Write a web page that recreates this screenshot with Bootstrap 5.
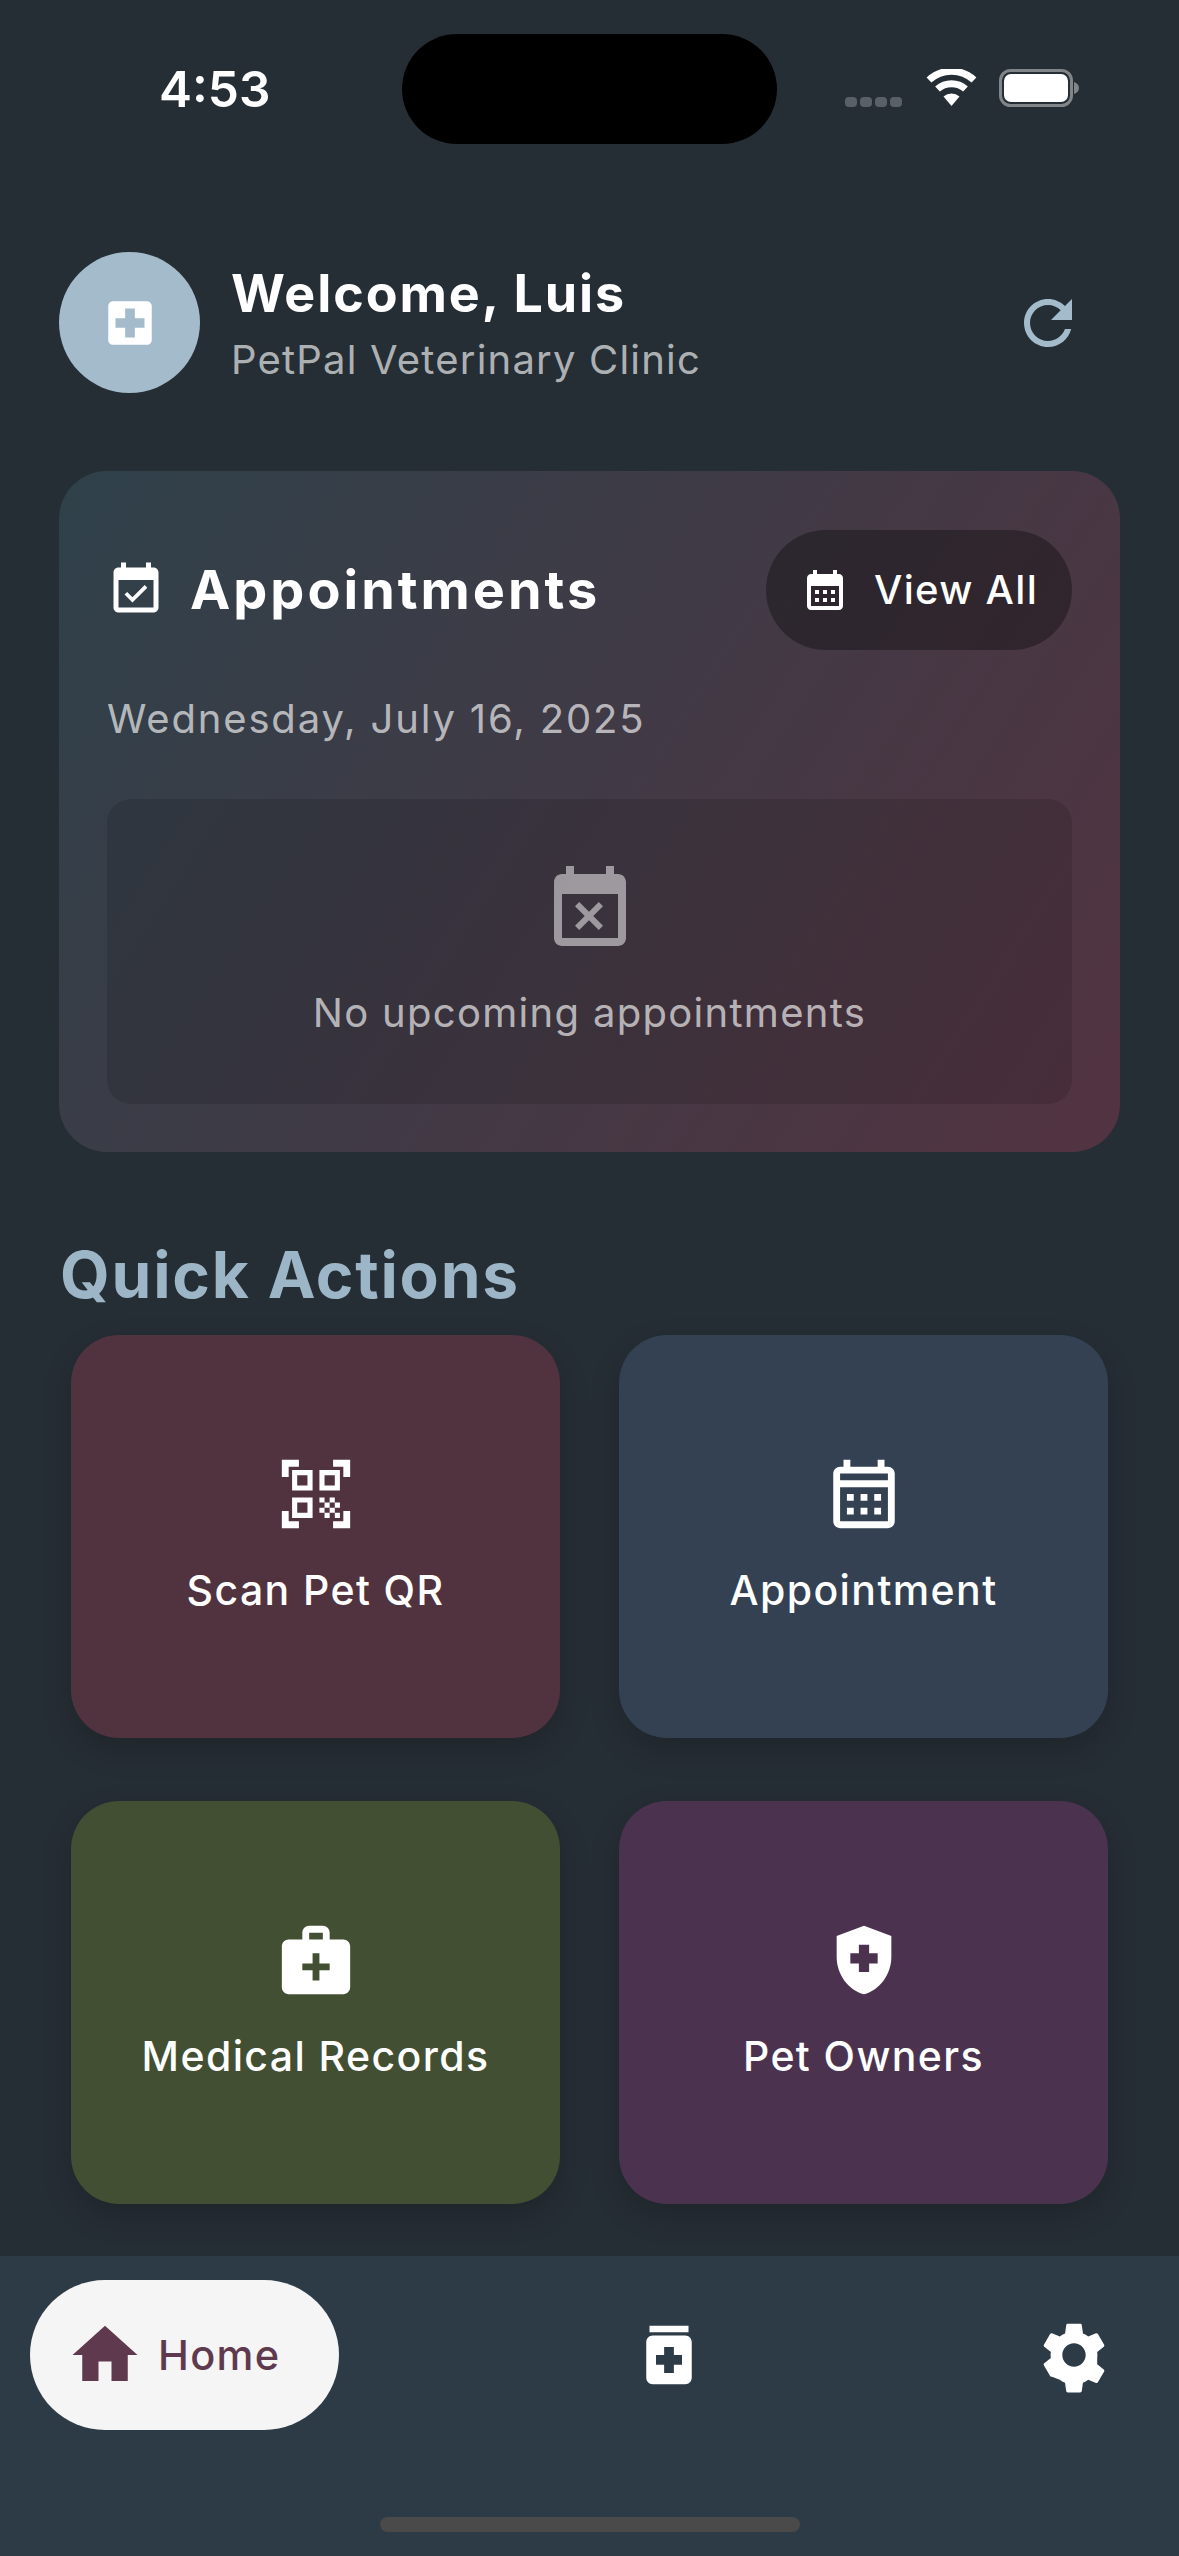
<!DOCTYPE html>
<html lang="en">
<head>
    <meta charset="UTF-8">
    <meta name="viewport" content="width=device-width, initial-scale=1.0">
    <title>PetPal Home</title>
    <link href="https://cdn.jsdelivr.net/npm/bootstrap@5.3.0/dist/css/bootstrap.min.css" rel="stylesheet">
    <style>
        body { background: #262e35; font-family: Inter, "Liberation Sans", sans-serif; color: #fff; }
        .phone-screen { width: 1179px; height: 2556px; overflow: hidden; }
        svg { display: block; flex-shrink: 0; fill: currentColor; }

        .status-row { height: 144px; padding: 34px 99px 0 159px; }
        .status-time { width: 243px; font-size: 49.5px; font-weight: 600; line-height: 110px; }
        .island { width: 375px; height: 110px; background: #000; border-radius: 55px; }
        .status-icons { margin-left: 68px; height: 110px; padding-top: 35px; }
        .signal-dots { gap: 3px; margin: 28px 24px 0 0; }
        .signal-dots span { width: 12px; height: 10px; border-radius: 4px; background: #596067; }
        .wifi-icon { margin-right: 22px; }

        .welcome-row { margin-top: 108px; padding: 0 59px; height: 141px; }
        .avatar-circle { width: 141px; height: 141px; background: #a3bbcb; color: #fff; }
        .welcome-text { margin-left: 31px; }
        .welcome-title { font-size: 52px; font-weight: 700; letter-spacing: 1.9px; line-height: 62px; margin: 0 0 10px; }
        .welcome-sub { font-size: 40px; letter-spacing: 1.2px; line-height: 50px; margin-bottom: -2px; color: rgba(255,255,255,.65); }
        .refresh-icon { color: #a3bbcb; margin-right: 36px; }

        .appt-card { margin: 78px 59px 0; height: 681px; padding: 48px; border: 0; border-radius: 48px; color: #fff;
            background: linear-gradient(123deg, #2f414a 0%, #533341 100%); }
        .appt-head { height: 120px; margin-top: 11px; }
        .appt-icon { margin-left: -1px; }
        .appt-title { font-size: 54px; font-weight: 700; letter-spacing: 3px; margin: 0 0 0 24px; }
        .view-btn { width: 306px; height: 120px; padding: 0 35px; gap: 25px; font-size: 40px; font-weight: 500; letter-spacing: 1.3px; white-space: nowrap;
            background: rgba(0,0,0,.32); color: #fff; border: 0; }
        .appt-date { font-size: 40px; letter-spacing: 1.85px; line-height: 50px; margin-top: 44px; color: rgba(255,255,255,.65); }
        .appt-empty { height: 307px; margin-top: 55px; border-radius: 24px; background: rgba(0,0,0,.12); padding-top: 63px; }
        .appt-empty svg { color: rgba(255,255,255,.5); }
        .appt-empty p { font-size: 40px; letter-spacing: 1.3px; line-height: 50px; margin: 30px 0 0; color: rgba(255,255,255,.65); }

        .quick-title { margin: 87px 0 0 60px; font-size: 64px; font-weight: 700; letter-spacing: 1.8px; line-height: 72px; color: #9db6c7; }
        .quick-grid { padding: 0 71px; margin-top: 24px; }
        .quick-grid .row { --bs-gutter-x: 59px; --bs-gutter-y: 63px; }
        .quick-tile { height: 403px; padding-bottom: 5px; border: 0; border-radius: 48px; color: #fff; box-shadow: 0 12px 30px rgba(0,0,0,.2); }
        .quick-tile span { font-size: 41px; font-weight: 500; letter-spacing: 1.4px; line-height: 50px; margin-top: 30px; }
        .tile-plum { background: #513340; }
        .tile-slate { background: #334152; }
        .tile-olive { background: #434f32; }
        .tile-violet { background: #4b3350; }

        .bottom-bar { margin-top: 52px; height: 300px; background: #2d3b47; padding: 24px 30px 0; }
        .bar-item { padding: 36px; color: #fff; background: none; border: 0; }
        .bar-item.is-active { background: #f5f5f5; color: #5f3a4e; width: 309px; padding-right: 0; }
        .bar-item span { font-size: 41.5px; font-weight: 500; letter-spacing: 1.3px; margin-left: 14px; }
        .home-bar { width: 420px; height: 15px; margin: 87px auto 0; background: #4a4a4a; border-radius: 8px; }
    </style>
</head>
<body>
<div class="phone-screen d-flex flex-column">

    <!-- status bar -->
    <div class="status-row d-flex">
        <div class="status-time">4:53</div>
        <div class="island"></div>
        <div class="status-icons d-flex">
            <div class="signal-dots d-flex"><span></span><span></span><span></span><span></span></div>
            <svg class="wifi-icon" width="51" height="38" viewBox="0 0 51 38" fill="none"><path d="M25.5 37 17.5 27.5a12 12 0 0 1 16 0z" fill="#fff"/><path d="M11.5 20a21 21 0 0 1 28 0M3 11a33 33 0 0 1 45 0" stroke="#fff" stroke-width="7" fill="none"/></svg>
            <svg width="80" height="38" viewBox="0 0 80 38"><rect x="1.5" y="1.5" width="71" height="35" rx="10" fill="none" stroke="#808589" stroke-width="3"/><rect x="5" y="5" width="64" height="28" rx="7" fill="#fff"/><path d="M75 13c3 1 5 3 5 6s-2 5-5 6z" fill="#808589"/></svg>
        </div>
    </div>

    <!-- welcome header -->
    <div class="welcome-row d-flex align-items-center">
        <div class="avatar-circle rounded-circle d-flex align-items-center justify-content-center">
            <svg width="58" height="58" viewBox="0 0 24 24"><path d="M19 3H5c-1.1 0-1.99.9-1.99 2L3 19c0 1.1.9 2 2 2h14c1.1 0 2-.9 2-2V5c0-1.1-.9-2-2-2zm-1 11h-4v4h-4v-4H6v-4h4V6h4v4h4v4z"/></svg>
        </div>
        <div class="flex-grow-1 welcome-text">
            <h1 class="welcome-title">Welcome, Luis</h1>
            <div class="welcome-sub">PetPal Veterinary Clinic</div>
        </div>
        <svg class="refresh-icon" width="72" height="72" viewBox="0 0 24 24"><path d="M17.65 6.35C16.2 4.9 14.21 4 12 4c-4.42 0-7.99 3.58-7.99 8s3.57 8 7.99 8c3.73 0 6.84-2.55 7.73-6h-2.08c-.82 2.33-3.04 4-5.65 4-3.31 0-6-2.69-6-6s2.69-6 6-6c1.66 0 3.14.69 4.22 1.78L13 11h7V4l-2.35 2.35z"/></svg>
    </div>

    <!-- appointments -->
    <div class="card appt-card">
        <div class="appt-head d-flex align-items-center">
            <svg class="appt-icon" width="60" height="60" viewBox="0 0 24 24"><path d="M16.53 11.06L15.47 10l-4.88 4.88-2.12-2.12-1.06 1.06L10.59 17l5.94-5.94zM19 3h-1V1h-2v2H8V1H6v2H5c-1.11 0-1.99.9-1.99 2L3 19c0 1.1.89 2 2 2h14c1.1 0 2-.9 2-2V5c0-1.1-.9-2-2-2zm0 16H5V8h14v11z"/></svg>
            <h2 class="appt-title">Appointments</h2>
            <button type="button" class="btn rounded-pill view-btn d-flex align-items-center ms-auto">
                <svg width="48" height="48" viewBox="0 0 24 24"><path fill-rule="evenodd" d="M19 4h-1V2h-2v2H8V2H6v2H5c-1.1 0-2 .9-2 2v14c0 1.1.9 2 2 2h14c1.1 0 2-.9 2-2V6c0-1.1-.9-2-2-2zM5 20V10h14v10H5zm2-8h2v2H7zm4 0h2v2h-2zm4 0h2v2h-2zm-8 4h2v2H7zm4 0h2v2h-2zm4 0h2v2h-2z"/></svg>
                View All
            </button>
        </div>
        <div class="appt-date">Wednesday, July 16, 2025</div>
        <div class="appt-empty d-flex flex-column align-items-center">
            <svg width="96" height="96" viewBox="0 0 24 24"><path d="M9.31 17l2.44-2.44L14.19 17l1.06-1.06-2.44-2.44 2.44-2.44L14.19 10l-2.44 2.44L9.31 10l-1.06 1.06 2.44 2.44-2.44 2.44L9.31 17zM19 3h-1V1h-2v2H8V1H6v2H5c-1.11 0-1.99.9-1.99 2L3 19c0 1.1.89 2 2 2h14c1.1 0 2-.9 2-2V5c0-1.1-.9-2-2-2zm0 16H5V8h14v11z"/></svg>
            <p>No upcoming appointments</p>
        </div>
    </div>

    <!-- quick actions -->
    <h2 class="quick-title">Quick Actions</h2>
    <div class="quick-grid">
        <div class="row">
            <div class="col-6">
                <div class="card quick-tile tile-plum align-items-center justify-content-center">
                    <svg width="82" height="82" viewBox="0 0 24 24"><path d="M9.5 6.5v3h-3v-3h3M11 5H5v6h6V5zm-1.5 9.5v3h-3v-3h3M11 13H5v6h6v-6zm6.5-6.5v3h-3v-3h3M19 5h-6v6h6V5zm-6 8h1.5v1.5H13V13zm1.5 1.5H16V16h-1.5v-1.5zM16 13h1.5v1.5H16V13zm-3 3h1.5v1.5H13V16zm1.5 1.5H16V19h-1.5v-1.5zM16 16h1.5v1.5H16V16zm1.5-1.5H19V16h-1.5v-1.5zm0 3H19V19h-1.5v-1.5zM22 7h-2V4h-3V2h5v5zm0 15v-5h-2v3h-3v2h5zM2 22h5v-2H4v-3H2v5zM2 2v5h2V4h3V2H2z"/></svg>
                    <span>Scan Pet QR</span>
                </div>
            </div>
            <div class="col-6">
                <div class="card quick-tile tile-slate align-items-center justify-content-center">
                    <svg width="82" height="82" viewBox="0 0 24 24"><path fill-rule="evenodd" d="M19 4h-1V2h-2v2H8V2H6v2H5c-1.1 0-2 .9-2 2v14c0 1.1.9 2 2 2h14c1.1 0 2-.9 2-2V6c0-1.1-.9-2-2-2zm0 2v2H5V6h14zM5 20V10h14v10H5zm2-8h2v2H7zm4 0h2v2h-2zm4 0h2v2h-2zm-8 4h2v2H7zm4 0h2v2h-2zm4 0h2v2h-2z"/></svg>
                    <span>Appointment</span>
                </div>
            </div>
            <div class="col-6">
                <div class="card quick-tile tile-olive align-items-center justify-content-center">
                    <svg width="82" height="82" viewBox="0 0 24 24"><path d="M20 6h-4V4c0-1.1-.9-2-2-2h-4c-1.1 0-2 .9-2 2v2H4c-1.1 0-2 .9-2 2v12c0 1.1.9 2 2 2h16c1.1 0 2-.9 2-2V8c0-1.1-.9-2-2-2zM10 4h4v2h-4V4zm6 11h-3v3h-2v-3H8v-2h3v-3h2v3h3v2z"/></svg>
                    <span>Medical Records</span>
                </div>
            </div>
            <div class="col-6">
                <div class="card quick-tile tile-violet align-items-center justify-content-center">
                    <svg width="82" height="82" viewBox="0 0 24 24"><path d="M10.5 13H8v-3h2.5V7.5h3V10H16v3h-2.5v2.5h-3V13zM12 2 4 5v6.09c0 5.05 3.41 9.76 8 10.91 4.59-1.15 8-5.86 8-10.91V5l-8-3z"/></svg>
                    <span>Pet Owners</span>
                </div>
            </div>
        </div>
    </div>

    <!-- bottom navigation -->
    <div class="bottom-bar">
        <nav class="d-flex justify-content-between align-items-center">
            <a class="bar-item is-active rounded-pill d-flex align-items-center text-decoration-none">
                <svg width="78" height="78" viewBox="0 0 24 24"><path d="M10 20v-6h4v6h5v-8h3L12 3 2 12h3v8z"/></svg>
                <span>Home</span>
            </a>
            <a class="bar-item"><svg width="78" height="78" viewBox="0 0 24 24"><path d="M6 3h12v2H6zm11 3H7c-1.1 0-2 .9-2 2v11c0 1.1.9 2 2 2h10c1.1 0 2-.9 2-2V8c0-1.1-.9-2-2-2zm-1 9h-2.5v2.5h-3V15H8v-3h2.5V9.5h3V12H16v3z"/></svg></a>
            <a class="bar-item"><svg width="78" height="78" viewBox="0 0 24 24"><path d="M19.14 12.94c.04-.3.06-.61.06-.94 0-.32-.02-.64-.07-.94l2.03-1.58c.18-.14.23-.41.12-.61l-1.92-3.32c-.12-.22-.37-.29-.59-.22l-2.39.96c-.5-.38-1.03-.7-1.62-.94l-.36-2.54c-.04-.24-.24-.41-.48-.41h-3.84c-.24 0-.43.17-.47.41l-.36 2.54c-.59.24-1.13.57-1.62.94l-2.39-.96c-.22-.08-.47 0-.59.22L2.74 8.87c-.12.21-.08.47.12.61l2.03 1.58c-.05.3-.09.63-.09.94s.02.64.07.94l-2.03 1.58c-.18.14-.23.41-.12.61l1.92 3.32c.12.22.37.29.59.22l2.39.96c.5.38 1.03.7 1.62.94l.36 2.54c.05.24.24.41.48.41h3.84c.24 0 .44-.17.47-.41l.36-2.54c.59-.24 1.13-.56 1.62-.94l2.39.96c.22.08.47 0 .59-.22l1.92-3.32c.12-.22.07-.47-.12-.61l-2.01-1.58zM12 15.6c-1.98 0-3.6-1.62-3.6-3.6s1.62-3.6 3.6-3.6 3.6 1.62 3.6 3.6-1.62 3.6-3.6 3.6z"/></svg></a>
        </nav>
        <div class="home-bar"></div>
    </div>
</div>
<script src="https://cdn.jsdelivr.net/npm/bootstrap@5.3.0/dist/js/bootstrap.bundle.min.js"></script>
</body>
</html>
